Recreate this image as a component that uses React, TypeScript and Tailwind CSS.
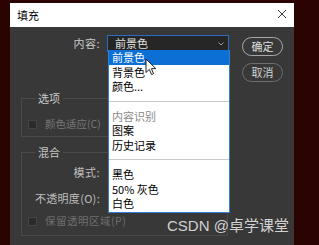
import React from 'react';

const cjk = { fontFamily: '"Noto Sans CJK SC", "Liberation Sans", sans-serif' };

const menuItems: { label: string; kind?: 'active' | 'muted' | 'sep' }[] = [
  { label: '前景色', kind: 'active' },
  { label: '背景色' },
  { label: '颜色...' },
  { label: '', kind: 'sep' },
  { label: '内容识别', kind: 'muted' },
  { label: '图案' },
  { label: '历史记录' },
  { label: '', kind: 'sep' },
  { label: '黑色' },
  { label: '50% 灰色' },
  { label: '白色' },
];

function Checkbox() {
  return <span className="block w-[9px] h-[9px] bg-[#2b2b2b] border border-[#444444]" />;
}

function Dropdown() {
  return (
    <div className="absolute left-0 top-full -mt-px w-[122px] bg-white border border-[#2f7fd6] border-t-0 z-10 pb-[1px]">
      {menuItems.map((item, i) => {
        if (item.kind === 'sep') {
          return <div key={i} className="my-[7px] h-px bg-[#c9c9c9]" />;
        }
        const active = item.kind === 'active';
        return (
          <div
            key={i}
            className={`h-[14.5px] leading-[14.5px] pl-[3px] text-[11px] ${
              active ? 'bg-[#0c6fd6] text-white' : item.kind === 'muted' ? 'text-[#8a8a8a]' : 'text-black'
            }`}
          >
            {item.label}
          </div>
        );
      })}
    </div>
  );
}

export default function App() {
  return (
    <div className="relative w-[319px] h-[245px] overflow-hidden bg-[#2c0303] pt-[3px] pl-[10px]" style={cjk}>
      <div className="w-[284px] h-[242px] flex flex-col">
        {/* title bar */}
        <div className="h-[24px] bg-white flex items-center justify-between pl-[7px] pr-[7px]">
          <span className="text-[11px] text-black">填充</span>
          <svg width="10" height="10" viewBox="0 0 10 10" className="mt-[-2px]">
            <path d="M1 1 L9 9 M9 1 L1 9" stroke="#333" strokeWidth="1" fill="none" />
          </svg>
        </div>

        {/* body */}
        <div className="flex-1 bg-[#383838] flex pt-[8px]">
          <div className="w-[219px]">
            <div className="flex items-center h-[17px]">
              <span className="w-[90px] text-right text-[11px] text-[#c8c8c8] tracking-[0.5px]">内容:</span>
              <div className="relative ml-[7px] w-[122px] h-[17px] bg-[#262626] border border-[#2a6cc0] flex items-center justify-between pl-[7px] pr-[4px]">
                <span className="text-[11px] text-[#e2e2e2]">前景色</span>
                <svg width="6" height="4" viewBox="0 0 6 4">
                  <path d="M0.5 0.5 L3 3 L5.5 0.5" stroke="#9a9a9a" fill="none" />
                </svg>
                <Dropdown />
              </div>
            </div>

            <fieldset className="ml-[11px] mt-[39px] w-[207px] border border-[#4a4a4a] px-0 pt-[12px] pb-[5px]">
              <legend className="ml-[13px] px-[3px] text-[11px] leading-[14px] text-[#c8c8c8]">选项</legend>
              <div className="flex items-center h-[14px] ml-[6px] gap-[8px]">
                <Checkbox />
                <span className="text-[10.5px] text-[#777777]">颜色适应(C)</span>
              </div>
            </fieldset>

            <fieldset className="ml-[11px] mt-[8px] w-[207px] border border-[#4a4a4a] px-0 pt-[6px] pb-[7px]">
              <legend className="ml-[13px] px-[3px] text-[11px] leading-[14px] text-[#c8c8c8]">混合</legend>
              <div className="flex items-center h-[14px]">
                <span className="w-[78px] text-right text-[11px] text-[#bdbdbd] tracking-[0.5px]">模式:</span>
              </div>
              <div className="flex items-center h-[14px] mt-[12px]">
                <span className="w-[78px] text-right text-[11px] text-[#bdbdbd] tracking-[0.3px] whitespace-nowrap">不透明度(O):</span>
              </div>
              <div className="flex items-center h-[14px] mt-[9px] ml-[6px] gap-[8px]">
                <Checkbox />
                <span className="text-[10.5px] text-[#6f6f6f] tracking-[0.5px]">保留透明区域(P)</span>
              </div>
            </fieldset>
          </div>

          <div className="ml-[13px] pt-[2px] flex flex-col gap-[7px]">
            <button className="w-[41px] h-[19px] rounded-full border border-[#a8a8a8] text-[11px] text-[#dedede] leading-none">
              确定
            </button>
            <button className="w-[41px] h-[19px] rounded-full border border-[#6e6e6e] text-[11px] text-[#d0d0d0] leading-none">
              取消
            </button>
          </div>
        </div>
      </div>

      {/* mouse cursor */}
      <svg className="absolute left-[145px] top-[58px] z-20" width="12" height="18" viewBox="0 0 12 18">
        <path
          d="M1 1 L1 14.5 L4.3 11.4 L6.6 16.6 L8.6 15.7 L6.4 10.6 L10.8 10.6 Z"
          fill="#ffffff"
          stroke="#222"
          strokeWidth="1"
          strokeLinejoin="round"
        />
      </svg>

      {/* watermark */}
      <div
        className="absolute left-[167px] top-[216px] text-[15px] leading-[20px] text-[#d2d2d2] whitespace-nowrap z-20"
        style={{ fontFamily: '"Liberation Sans", "Noto Sans CJK SC", sans-serif' }}
      >
        CSDN @卓学课堂
      </div>
    </div>
  );
}
